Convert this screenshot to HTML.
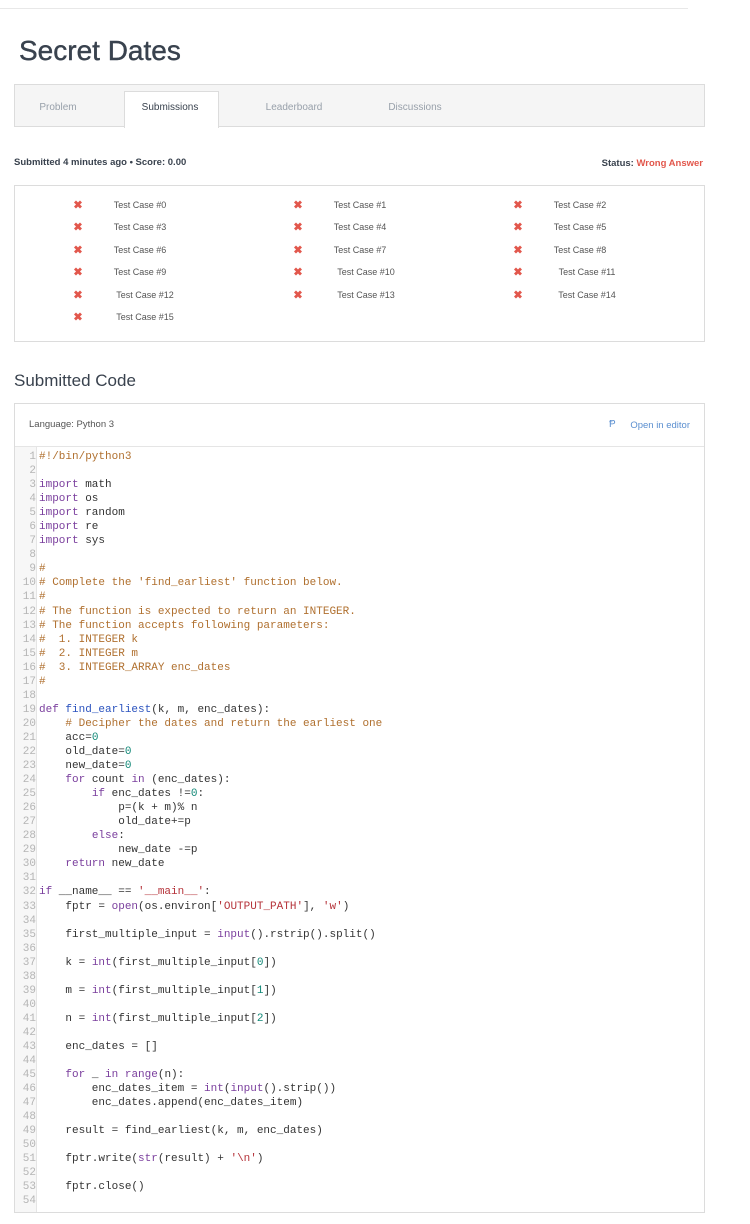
<!DOCTYPE html>
<html><head><meta charset="utf-8"><style>
*{margin:0;padding:0;box-sizing:border-box}
body{width:750px;height:1224px;background:#fff;font-family:"Liberation Sans",sans-serif;position:relative;overflow:hidden;color:#39424e}
.a{position:absolute;white-space:nowrap}
.tab{position:absolute;top:86px;font-size:10px;color:#98a0aa;line-height:43px;transform:translateX(-50%)}
.tc{position:absolute;font-size:9px;color:#555;transform:translate(-50%,-50%);white-space:nowrap}
.x{position:absolute;color:#e2574c;font-size:11px;font-weight:bold;transform:translate(-50%,-50%)}
pre{position:absolute;left:15px;top:450px;font-family:"Liberation Mono",monospace;font-size:11px;line-height:14.04px;color:#333}
.g{display:inline-block;width:21px;text-align:right;color:#b5b5b5;margin-right:3px}
.k{color:#7a3e9d}.c{color:#b0702f}.s{color:#b5333a}.n{color:#118877}.f{color:#2a52be}.b{color:#7a3e9d}
</style></head><body>
<div class="a" style="left:0;top:8px;width:688px;height:1px;background:#e8e8e8"></div>
<div class="a" style="left:19px;top:33px;font-size:28px;color:#39424e;line-height:36px;-webkit-text-stroke:0.4px #39424e">Secret Dates</div>
<div class="a" style="left:14px;top:84px;width:691px;height:43px;background:#f5f5f5;border:1px solid #dcdcdc"></div>
<div class="a" style="left:124px;top:91px;width:95px;height:37px;background:#fff;border:1px solid #dcdcdc;border-bottom:none"></div>
<div class="tab" style="left:58px">Problem</div>
<div class="tab" style="left:170px;color:#39424e">Submissions</div>
<div class="tab" style="left:294px">Leaderboard</div>
<div class="tab" style="left:415px">Discussions</div>
<div class="a" style="left:14px;top:157px;font-size:9.5px;font-weight:bold;color:#39424e">Submitted 4 minutes ago • Score: 0.00</div>
<div class="a" style="right:47px;top:158px;font-size:9.5px;font-weight:bold;color:#39424e">Status: <span style="color:#e2574c">Wrong Answer</span></div>
<div class="a" style="left:14px;top:185px;width:691px;height:157px;border:1px solid #dcdcdc"></div>
<div class="x" style="left:78px;top:205px">✖</div><div class="tc" style="left:140px;top:205px">Test Case #0</div>
<div class="x" style="left:298px;top:205px">✖</div><div class="tc" style="left:360px;top:205px">Test Case #1</div>
<div class="x" style="left:518px;top:205px">✖</div><div class="tc" style="left:580px;top:205px">Test Case #2</div>
<div class="x" style="left:78px;top:227px">✖</div><div class="tc" style="left:140px;top:227px">Test Case #3</div>
<div class="x" style="left:298px;top:227px">✖</div><div class="tc" style="left:360px;top:227px">Test Case #4</div>
<div class="x" style="left:518px;top:227px">✖</div><div class="tc" style="left:580px;top:227px">Test Case #5</div>
<div class="x" style="left:78px;top:250px">✖</div><div class="tc" style="left:140px;top:250px">Test Case #6</div>
<div class="x" style="left:298px;top:250px">✖</div><div class="tc" style="left:360px;top:250px">Test Case #7</div>
<div class="x" style="left:518px;top:250px">✖</div><div class="tc" style="left:580px;top:250px">Test Case #8</div>
<div class="x" style="left:78px;top:272px">✖</div><div class="tc" style="left:140px;top:272px">Test Case #9</div>
<div class="x" style="left:298px;top:272px">✖</div><div class="tc" style="left:366px;top:272px">Test Case #10</div>
<div class="x" style="left:518px;top:272px">✖</div><div class="tc" style="left:587px;top:272px">Test Case #11</div>
<div class="x" style="left:78px;top:295px">✖</div><div class="tc" style="left:145px;top:295px">Test Case #12</div>
<div class="x" style="left:298px;top:295px">✖</div><div class="tc" style="left:366px;top:295px">Test Case #13</div>
<div class="x" style="left:518px;top:295px">✖</div><div class="tc" style="left:587px;top:295px">Test Case #14</div>
<div class="x" style="left:78px;top:317px">✖</div><div class="tc" style="left:145px;top:317px">Test Case #15</div>
<div class="a" style="left:14px;top:370px;font-size:17px;color:#39424e;line-height:22px">Submitted Code</div>
<div class="a" style="left:14px;top:403px;width:691px;height:810px;border:1px solid #dcdcdc"></div>
<div class="a" style="left:15px;top:446px;width:689px;height:1px;background:#e5e5e5"></div>
<div class="a" style="left:15px;top:447px;width:22px;height:765px;background:#f7f7f7;border-right:1px solid #e5e5e5"></div>
<div class="a" style="left:29px;top:419px;font-size:9.5px;color:#555">Language: Python 3</div>
<div class="a" style="left:609px;top:419px;font-size:10px;color:#5b8fd0">Ᵽ</div>
<div class="a" style="right:60px;top:420px;font-size:9.5px;color:#5b8fd0">Open in editor</div>
<pre><span class="g">1</span><span class="c">#!/bin/python3</span>
<span class="g">2</span>
<span class="g">3</span><span class="k">import</span> math
<span class="g">4</span><span class="k">import</span> os
<span class="g">5</span><span class="k">import</span> random
<span class="g">6</span><span class="k">import</span> re
<span class="g">7</span><span class="k">import</span> sys
<span class="g">8</span>
<span class="g">9</span><span class="c">#</span>
<span class="g">10</span><span class="c"># Complete the 'find_earliest' function below.</span>
<span class="g">11</span><span class="c">#</span>
<span class="g">12</span><span class="c"># The function is expected to return an INTEGER.</span>
<span class="g">13</span><span class="c"># The function accepts following parameters:</span>
<span class="g">14</span><span class="c">#  1. INTEGER k</span>
<span class="g">15</span><span class="c">#  2. INTEGER m</span>
<span class="g">16</span><span class="c">#  3. INTEGER_ARRAY enc_dates</span>
<span class="g">17</span><span class="c">#</span>
<span class="g">18</span>
<span class="g">19</span><span class="k">def</span> <span class="f">find_earliest</span>(k, m, enc_dates):
<span class="g">20</span>    <span class="c"># Decipher the dates and return the earliest one</span>
<span class="g">21</span>    acc=<span class="n">0</span>
<span class="g">22</span>    old_date=<span class="n">0</span>
<span class="g">23</span>    new_date=<span class="n">0</span>
<span class="g">24</span>    <span class="k">for</span> count <span class="k">in</span> (enc_dates):
<span class="g">25</span>        <span class="k">if</span> enc_dates !=<span class="n">0</span>:
<span class="g">26</span>            p=(k + m)% n
<span class="g">27</span>            old_date+=p
<span class="g">28</span>        <span class="k">else</span>:
<span class="g">29</span>            new_date -=p
<span class="g">30</span>    <span class="k">return</span> new_date
<span class="g">31</span>
<span class="g">32</span><span class="k">if</span> __name__ == <span class="s">'__main__'</span>:
<span class="g">33</span>    fptr = <span class="b">open</span>(os.environ[<span class="s">'OUTPUT_PATH'</span>], <span class="s">'w'</span>)
<span class="g">34</span>
<span class="g">35</span>    first_multiple_input = <span class="b">input</span>().rstrip().split()
<span class="g">36</span>
<span class="g">37</span>    k = <span class="b">int</span>(first_multiple_input[<span class="n">0</span>])
<span class="g">38</span>
<span class="g">39</span>    m = <span class="b">int</span>(first_multiple_input[<span class="n">1</span>])
<span class="g">40</span>
<span class="g">41</span>    n = <span class="b">int</span>(first_multiple_input[<span class="n">2</span>])
<span class="g">42</span>
<span class="g">43</span>    enc_dates = []
<span class="g">44</span>
<span class="g">45</span>    <span class="k">for</span> _ <span class="k">in</span> <span class="b">range</span>(n):
<span class="g">46</span>        enc_dates_item = <span class="b">int</span>(<span class="b">input</span>().strip())
<span class="g">47</span>        enc_dates.append(enc_dates_item)
<span class="g">48</span>
<span class="g">49</span>    result = find_earliest(k, m, enc_dates)
<span class="g">50</span>
<span class="g">51</span>    fptr.write(<span class="b">str</span>(result) + <span class="s">'\n'</span>)
<span class="g">52</span>
<span class="g">53</span>    fptr.close()
<span class="g">54</span></pre>
</body></html>
